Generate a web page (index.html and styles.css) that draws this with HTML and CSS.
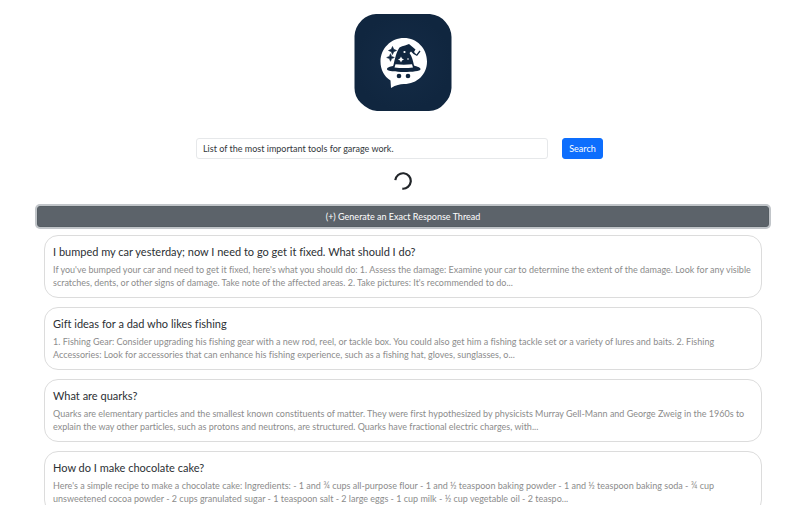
FILE: index.html
```
<!DOCTYPE html>
<html lang="en">
<head>
<meta charset="utf-8">
<title>Search</title>
<link rel="stylesheet" href="styles.css">
</head>
<body>
<main class="page">
  <svg class="logo" viewBox="0 0 98 98" role="img" aria-label="Wizard chat logo">
    <defs>
      <radialGradient id="bg"><stop offset="0" stop-color="#142b46"/><stop offset="1" stop-color="#10263f"/></radialGradient>
    </defs>
    <path fill="url(#bg)" d="M22 1H76Q86 2 91.500 9Q97.500 16 97.500 24V75Q97 84 90 91Q84 98 75 98H23Q14 97 7 90Q0.500 84 0.500 75V23Q1 14 8 7Q14 1.500 22 1Z"/>
    <path fill="#fff" d="M50 25C63 25 73 35.500 73 48.500C73 61.500 63 71 50 71C46 71 42 72 37 75L36.500 67.500C30 63.500 26.500 56.500 26.500 48.500C26.500 35.500 37 25 50 25Z"/>
    <g fill="#10263f">
      <path d="M39.500 52C41 45.500 42.500 38.500 45.500 34.500Q48 33 51 32.500L55 31L61.500 36.500L60 39L62.500 41.500L65.500 37.500L66.500 38.500L63 43L59.500 41L57 38.500L55.500 40C58 43.500 59 47.500 60 52.500C63 53.500 66.500 54.500 66.500 56.200C66.500 58 58 59 50 59C42 59 33 58 33 56.200C33 54.500 36 53.500 39 53Z"/>
      <path d="M38.500 33.500L39.700 36.300L42.500 37.500L39.700 38.700L38.500 41.500L37.300 38.700L34.500 37.500L37.300 36.300Z" stroke="#10263f" stroke-width=".6"/>
      <path d="M36.500 40.700L37.600 43.400L40.300 44.500L37.600 45.600L36.500 48.300L35.400 45.600L32.700 44.500L35.400 43.400Z" stroke="#10263f" stroke-width=".6"/>
      <circle cx="45" cy="63" r="2.300"/><circle cx="54" cy="63" r="2.300"/>
    </g>
    <g fill="#fff">
      <path d="M41.500 51.300Q50 52 58 51.300L59 54.500Q50 55.500 40.500 54.500Z"/>
      <path d="M47 43.500L48 45.500L50 46.500L48 47.500L47 49.500L46 47.500L44 46.500L46 45.500Z"/>
      <circle cx="50.500" cy="39" r="1.100"/><circle cx="54" cy="46" r=".8"/>
    </g>
  </svg>
  <form class="search" onsubmit="return false">
    <input class="query" type="text" aria-label="Question" value="List of the most important tools for garage work.">
    <button class="submit" type="submit">Search</button>
  </form>
  <svg class="spinner" viewBox="0 0 18 18" role="img" aria-label="Loading"><path d="M1.300 8.200A7.750 7.750 0 1 1 8.300 16.700" fill="none" stroke="#212529" stroke-width="2.200"/></svg>
  <button class="generate" type="button">(+) Generate an Exact Response Thread</button>
  <section class="threads">
    <article class="card">
      <h2>I bumped my car yesterday; now I need to go get it fixed. What should I do?</h2>
      <p>If you've bumped your car and need to get it fixed, here's what you should do: 1. Assess the damage: Examine your car to determine the extent of the damage. Look for any visible scratches, dents, or other signs of damage. Take note of the affected areas. 2. Take pictures: It's recommended to do...</p>
    </article>
    <article class="card">
      <h2>Gift ideas for a dad who likes fishing</h2>
      <p>1. Fishing Gear: Consider upgrading his fishing gear with a new rod, reel, or tackle box. You could also get him a fishing tackle set or a variety of lures and baits. 2. Fishing Accessories: Look for accessories that can enhance his fishing experience, such as a fishing hat, gloves, sunglasses, o...</p>
    </article>
    <article class="card">
      <h2>What are quarks?</h2>
      <p>Quarks are elementary particles and the smallest known constituents of matter. They were first hypothesized by physicists Murray Gell-Mann and George Zweig in the 1960s to explain the way other particles, such as protons and neutrons, are structured. Quarks have fractional electric charges, with...</p>
    </article>
    <article class="card">
      <h2>How do I make chocolate cake?</h2>
      <p>Here's a simple recipe to make a chocolate cake: Ingredients: - 1 and ¾ cups all-purpose flour - 1 and ½ teaspoon baking powder - 1 and ½ teaspoon baking soda - ¾ cup unsweetened cocoa powder - 2 cups granulated sugar - 1 teaspoon salt - 2 large eggs - 1 cup milk - ½ cup vegetable oil - 2 teaspo...</p>
    </article>
  </section>
</main>
</body>
</html>
```
FILE: styles.css
```
* {
  box-sizing: border-box;
}

body {
  margin: 0;
  background: #fff;
  color: #2c3034;
  font: 9px/13px Lato, "Noto Sans", sans-serif;
  font-variant-ligatures: none;
}

.page {
  display: flex;
  flex-direction: column;
  align-items: center;
  padding: 13px 37px;
}

.logo {
  width: 98px;
  height: 98px;
}

.search {
  display: flex;
  gap: 14px;
  width: 56%;
  max-width: 407px;
  margin: 27px 7px 13px 0;
}

.query,
.submit,
.generate {
  height: 21px;
  padding: 0 6px;
  border: 1px solid #e6e8ea;
  border-radius: 3px;
  font: inherit;
}

.query {
  flex: 1;
  min-width: 0;
  color: #33373b;
}

.submit {
  min-width: 41px;
  border-color: #0d6efd;
  background: #0d6efd;
  color: #fff;
}

.spinner {
  width: 18px;
  height: 18px;
}

.generate {
  width: 100%;
  margin: 16px 0 8px;
  border-color: #565e64;
  background: #5c636a;
  box-shadow: 0 0 0 2px #c1c5c9;
  color: #fff;
}

.threads {
  display: grid;
  gap: 9px;
  width: 100%;
  padding: 0 7px;
}

.card {
  padding: 9px 8px 8px;
  border: 1px solid #dcdcdc;
  border-radius: 14px;
}

.card h2 {
  margin: 0 0 5px;
  font-size: 11px;
  font-weight: 400;
  line-height: 13px;
}

.card p {
  margin: 0;
  color: #8c8c8c;
}
```
